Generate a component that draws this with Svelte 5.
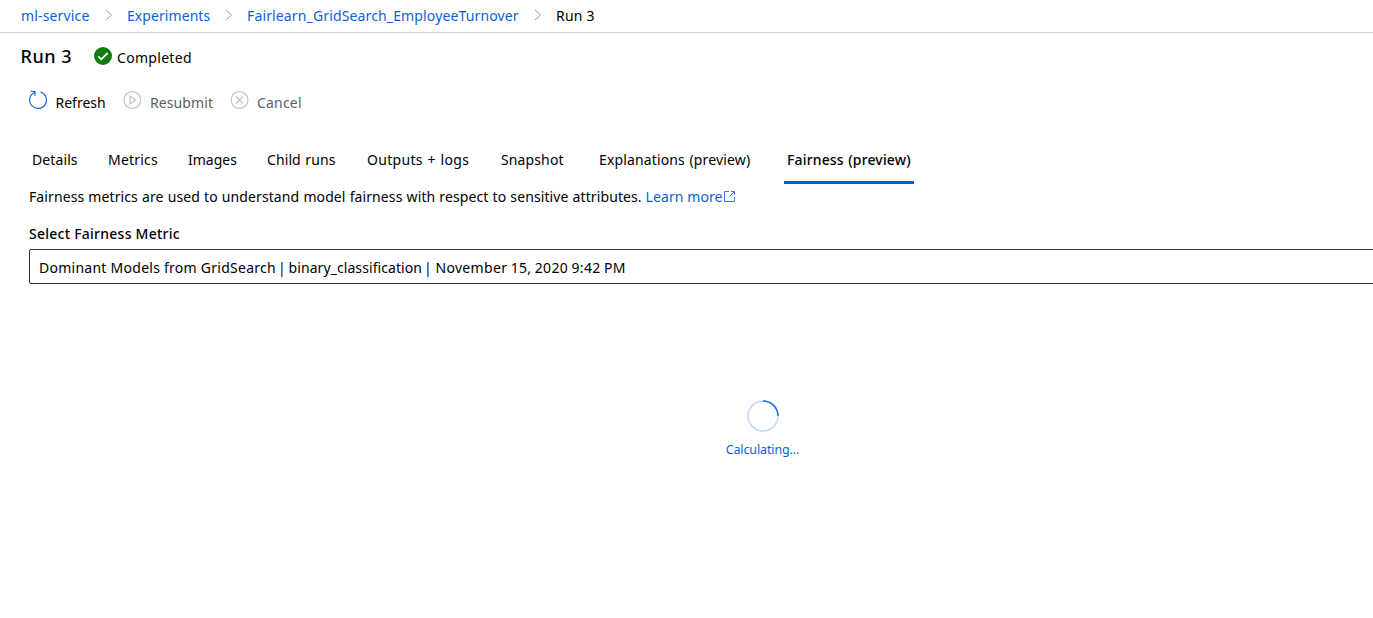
<script>
  const crumbs = [
    { label: 'ml-service', width: 69, tone: '#c09a66', spacing: 0.15 },
    { label: 'Experiments', width: 83, tone: '#c09a66', spacing: 0.07 },
    { label: 'Fairlearn_GridSearch_EmployeeTurnover', width: 272, tone: '#7d9dcb', spacing: 0.14 }
  ];
  const tabs = [
    { label: 'Details', width: 46, gap: 30, spacing: 0.1 },
    { label: 'Metrics', width: 50, gap: 30, spacing: 0.2 },
    { label: 'Images', width: 49, gap: 30, spacing: 0 },
    { label: 'Child runs', width: 69, gap: 31, spacing: 0.1 },
    { label: 'Outputs + logs', width: 103, gap: 31, spacing: 0.3 },
    { label: 'Snapshot', width: 64, gap: 34, spacing: 0.12 },
    { label: 'Explanations (preview)', width: 152, gap: 33, spacing: 0.14 }
  ];
</script>

<main>
  <nav class="crumbs">
    {#each crumbs as c}
      <a style:width="{c.width}px" style:letter-spacing="{c.spacing}px">{c.label}</a>
      <svg class="chev" width="8" height="12" viewBox="0 0 8 12" fill="none" stroke={c.tone}><path d="M1 1l5.500 5L1 11" /></svg>
    {/each}
    <span>Run 3</span>
  </nav>

  <header>
    <h1>Run 3</h1>
    <svg class="check" width="18" height="18" viewBox="0 0 18 18"><circle cx="9" cy="9" r="9" fill="#107c10" /><path d="M4.300 9.300l3 3L13.700 6" fill="none" stroke="#fff" stroke-width="1.800" /></svg>
    <span class="status">Completed</span>
  </header>

  <div class="toolbar">
    <svg width="20" height="20" viewBox="0 0 20 20" fill="none" stroke="#1664d9" stroke-width="1.2"><path d="M12.500 2A8.400 8.400 0 1 1 6.300 2.500M2.800 1.500h4.200v4.200" /></svg>
    <span class="refresh">Refresh</span>
    <svg width="20" height="20" viewBox="0 0 20 20" fill="none" stroke="#c8c6c4" stroke-width="1.3"><circle cx="10.300" cy="10" r="8.400" /><path d="M8.100 6.300v7.400L13.800 10z" /></svg>
    <span class="resubmit">Resubmit</span>
    <svg width="20" height="20" viewBox="0 0 20 20" fill="none" stroke="#c8c6c4" stroke-width="1.3"><circle cx="9.500" cy="10" r="8.400" /><path d="M6 6.500l7 7M13 6.500l-7 7" /></svg>
    <span class="cancel">Cancel</span>
  </div>

  <div class="tabs">
    {#each tabs as t}
      <span class="tab" style:width="{t.width}px" style:margin-right="{t.gap}px" style:letter-spacing="{t.spacing}px">{t.label}</span>
    {/each}
    <span class="tab active">Fairness (preview)</span>
  </div>

  <p class="intro">
    <span>Fairness metrics are used to understand model fairness with respect to sensitive attributes.</span>
    <a>Learn more</a>
    <svg width="12" height="12" viewBox="0 0 12 12" fill="none" stroke="#3d7de0"><path d="M5 1.500H.5v10h10V7M7 1.500h3.500V5M10.500 1.500L5.500 6.500" /></svg>
  </p>

  <div class="label">Select Fairness Metric</div>
  <div class="select"><span class="model">Dominant Models from GridSearch</span><span class="kind">| binary_classification</span><span class="date">| November 15, 2020 9:42 PM</span></div>

  <div class="loading">
    <svg width="32" height="32" viewBox="0 0 32 32" fill="none" stroke-width="1.500"><circle cx="16" cy="16" r="15" stroke="#c0d8f8" /><path d="M16 1a15 15 0 0 1 15 15" stroke="#1f70df" /></svg>
    <span>Calculating...</span>
  </div>
</main>

<style>
  :global(body) { background: #fff; overflow: hidden; }
  main { height: 618px; overflow: hidden; font: 400 14px/20px "Noto Sans", sans-serif; color: #000; }
  span, a { white-space: nowrap; flex: none; }
  svg { flex: none; display: block; }
  a { color: #0c5fd7; }
  .crumbs { display: flex; align-items: flex-start; padding: 6px 0 0 21px; height: 26px; border-bottom: 1px solid #d6d6d6; }
  .crumbs span { letter-spacing: 0.2px; }
  .chev { margin: 3px 14px 0 15px; }
  header { display: flex; height: 44px; padding-left: 20.500px; }
  h1 { margin: 11px 0 0; width: 73.500px; font-size: 18px; line-height: 24px; font-weight: 500; letter-spacing: 0.5px; }
  .check { margin-top: 14px; }
  .status { margin: 15px 0 0 5px; letter-spacing: 0.3px; }
  .toolbar { display: flex; height: 57px; padding: 13px 0 0 28px; box-sizing: border-box; }
  .toolbar span { margin-top: 3px; }
  .refresh { width: 66.500px; margin-left: 7.500px; letter-spacing: 0; }
  .resubmit { width: 80px; margin-left: 8px; color: #605e5c; letter-spacing: 0.1px; }
  .cancel { margin-left: 7px; color: #605e5c; letter-spacing: 0.2px; }
  .tabs { display: flex; height: 50px; padding-left: 32px; }
  .tab { padding-top: 16px; box-sizing: border-box; word-spacing: 0.8px; }
  .active { width: 130px; padding-left: 3px; font-weight: 500; letter-spacing: 0.15px; border-bottom: 3px solid #015cda; }
  .intro { display: flex; margin: 0; padding: 3px 0 0 29px; height: 37px; box-sizing: border-box; }
  .intro span { width: 616.500px; letter-spacing: 0.1px; word-spacing: 0.35px; }
  .intro a { width: 78.500px; letter-spacing: 0.1px; }
  .intro svg { margin-top: 3px; }
  .label { padding-left: 29px; height: 28px; padding-top: 3px; box-sizing: border-box; font-weight: 500; letter-spacing: 0.25px; }
  .select { display: flex; margin: 0 -4px 0 29px; height: 35px; box-sizing: border-box; border: 1px solid #323130; border-radius: 2px; padding: 8px 9px; letter-spacing: 0.1px; }
  .model { width: 239px; letter-spacing: 0.26px; }
  .kind { width: 146px; word-spacing: -1px; letter-spacing: 0.08px; }
  .date { word-spacing: -0.6px; letter-spacing: 0.33px; }
  .loading { display: flex; flex-direction: column; align-items: center; width: 74px; margin: 115px 0 0 725.500px; font-size: 12.500px; color: #0c5fd7; }
  .loading svg { margin-top: 0.5px; }
  .loading span { margin-top: 8.500px; letter-spacing: -0.12px; }
</style>
